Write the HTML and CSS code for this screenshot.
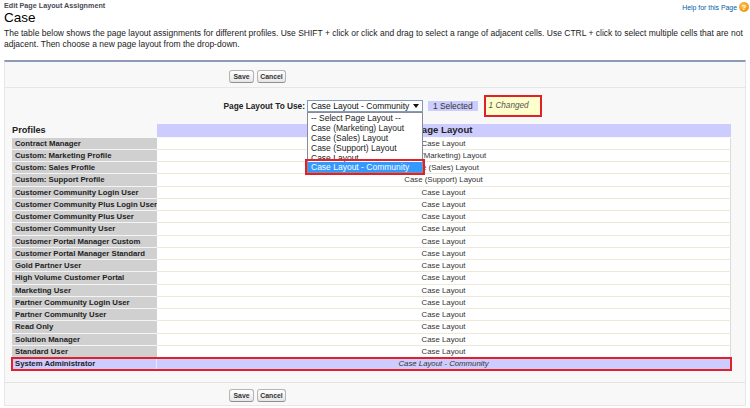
FILE: index.html
```html
<!DOCTYPE html>
<html>
<head>
<meta charset="utf-8">
<title>Edit Page Layout Assignment</title>
<link rel="stylesheet" href="styles.css">
</head>
<body>
<div class="page">
  <div class="top">
    <div class="titles">
      <div class="ptype">Edit Page Layout Assignment</div>
      <h1 class="title">Case</h1>
    </div>
    <a class="help">Help for this Page <span class="helpicon">?</span></a>
  </div>
  <p class="desc">The table below shows the page layout assignments for different profiles. Use SHIFT + click or click and drag to select a range of adjacent cells. Use CTRL + click to select multiple cells that are not<br>adjacent. Then choose a new page layout from the drop-down.</p>

  <div class="panel">
    <div class="btnrow">
      <button class="btn save">Save</button>
      <button class="btn cancel">Cancel</button>
    </div>

    <div class="chooser">
      <label class="chooser-label">Page Layout To Use:</label>
      <div class="selectwrap">
        <div class="select">
          <span>Case Layout - Community</span>
          <svg class="arrow" width="6" height="4" viewBox="0 0 6 4"><polygon points="0,0 6,0 3,4" fill="#111"/></svg>
        </div>
        <ul class="dropdown">
          <li>-- Select Page Layout --</li>
          <li>Case (Marketing) Layout</li>
          <li>Case (Sales) Layout</li>
          <li>Case (Support) Layout</li>
          <li class="cut">Case Layout</li>
          <li class="hi">Case Layout - Community</li>
        </ul>
      </div>
      <span class="selected">1 Selected</span>
      <span class="changed">1 Changed</span>
    </div>

    <div class="table">
      <div class="row head"><div class="hl">Profiles</div><div class="hr">Page Layout</div></div>
      <div class="row"><div class="c1">Contract Manager</div><div class="c2">Case Layout</div></div>
      <div class="row"><div class="c1">Custom: Marketing Profile</div><div class="c2">Case (Marketing) Layout</div></div>
      <div class="row"><div class="c1">Custom: Sales Profile</div><div class="c2">Case (Sales) Layout</div></div>
      <div class="row"><div class="c1">Custom: Support Profile</div><div class="c2">Case (Support) Layout</div></div>
      <div class="row"><div class="c1">Customer Community Login User</div><div class="c2">Case Layout</div></div>
      <div class="row"><div class="c1">Customer Community Plus Login User</div><div class="c2">Case Layout</div></div>
      <div class="row"><div class="c1">Customer Community Plus User</div><div class="c2">Case Layout</div></div>
      <div class="row"><div class="c1">Customer Community User</div><div class="c2">Case Layout</div></div>
      <div class="row"><div class="c1">Customer Portal Manager Custom</div><div class="c2">Case Layout</div></div>
      <div class="row"><div class="c1">Customer Portal Manager Standard</div><div class="c2">Case Layout</div></div>
      <div class="row"><div class="c1">Gold Partner User</div><div class="c2">Case Layout</div></div>
      <div class="row"><div class="c1">High Volume Customer Portal</div><div class="c2">Case Layout</div></div>
      <div class="row"><div class="c1">Marketing User</div><div class="c2">Case Layout</div></div>
      <div class="row"><div class="c1">Partner Community Login User</div><div class="c2">Case Layout</div></div>
      <div class="row"><div class="c1">Partner Community User</div><div class="c2">Case Layout</div></div>
      <div class="row"><div class="c1">Read Only</div><div class="c2">Case Layout</div></div>
      <div class="row"><div class="c1">Solution Manager</div><div class="c2">Case Layout</div></div>
      <div class="row"><div class="c1">Standard User</div><div class="c2">Case Layout</div></div>
      <div class="row sel"><div class="c1">System Administrator</div><div class="c2">Case Layout - Community</div></div>
    </div>

    <div class="btnrow bottom">
      <button class="btn save">Save</button>
      <button class="btn cancel">Cancel</button>
    </div>
  </div>
</div>
</body>
</html>
```

FILE: styles.css
```css
* { box-sizing: border-box; }
html, body { margin: 0; padding: 0; background: #fff; }
body {
  font-family: "Liberation Sans", Arial, sans-serif;
  color: #222;
  width: 750px;
  height: 408px;
  overflow: hidden;
}
.page { padding: 0 1px 0 4px; }

.top { display: flex; justify-content: space-between; align-items: flex-start; }
.ptype {
  font-size: 7.2px;
  font-weight: bold;
  color: #4a4a56;
  line-height: 9px;
  margin-top: 1px;
}
.title {
  margin: 0;
  font-size: 13.5px;
  font-weight: normal;
  line-height: 15px;
  color: #000;
}
.help {
  display: flex;
  align-items: center;
  gap: 2px;
  font-size: 6.9px;
  color: #015ba7;
  margin-top: 2px;
  text-decoration: none;
}
.helpicon {
  width: 10px;
  height: 10px;
  border-radius: 50%;
  background: radial-gradient(circle at 40% 35%, #ffc24a, #e58600);
  color: #fff;
  font-weight: bold;
  font-size: 7.5px;
  display: flex;
  align-items: center;
  justify-content: center;
}

.desc {
  margin: 3px 0 10px;
  font-size: 8.5px;
  line-height: 11px;
  color: #222;
  white-space: nowrap;
}

.panel {
  margin-right: 3px;
  border-top: 2px solid #8e9bb8;
  border-left: 1px solid #e6e6e6;
  border-right: 1px solid #e6e6e6;
  border-bottom: 1px solid #e6e6e6;
  background: #f8f8f8;
}

.btnrow {
  display: flex;
  gap: 3px;
  padding: 8px 0 4px 224px;
  border-bottom: 1px solid #e6e6e6;
}
.btnrow.bottom {
  margin-top: 12px;
  border-bottom: none;
  border-top: 1px solid #e3e3e3;
  padding: 6px 0 3px 224px;
}
.btn {
  height: 13px;
  padding: 0;
  font-family: "Liberation Sans", Arial, sans-serif;
  font-size: 6.9px;
  font-weight: bold;
  color: #333;
  background: linear-gradient(#ffffff, #e6e6e6);
  border: 1px solid #b5b5b5;
  border-bottom-color: #8f8f8f;
  border-radius: 3px;
  line-height: 11px;
}
.btn.save { width: 25px; }
.btn.cancel { width: 29px; }

.chooser {
  display: flex;
  align-items: center;
  padding: 7px 0;
}
.chooser-label {
  width: 302px;
  padding-right: 2px;
  text-align: right;
  font-weight: bold;
  font-size: 8.3px;
  color: #222;
}
.selectwrap {
  position: relative;
  width: 116px;
  height: 12px;
}
.select {
  height: 12px;
  border: 1px solid #7f9db9;
  background: #fff;
  font-size: 8.5px;
  line-height: 10px;
  padding: 0 3px 0 3px;
  display: flex;
  justify-content: space-between;
  align-items: center;
  color: #111;
}
.dropdown {
  position: absolute;
  top: 12px;
  left: 0;
  width: 116px;
  margin: 0;
  padding: 0;
  list-style: none;
  background: #fff;
  border: 1px solid #8a8a9a;
  z-index: 5;
}
.dropdown li {
  height: 10px;
  line-height: 10px;
  font-size: 8.5px;
  padding-left: 3px;
  color: #222;
  white-space: nowrap;
  overflow: hidden;
}
.dropdown li.cut { height: 9px; }
.dropdown li.hi {
  background: #3399ff;
  color: #fff;
  outline: 2px solid #e2202a;
  outline-offset: 1px;
}
.selected {
  margin-left: 5px;
  background: #ccccff;
  font-size: 8.4px;
  padding: 0 5px;
  height: 10px;
  line-height: 10px;
  color: #333;
}
.changed {
  margin-left: 6px;
  width: 58px;
  height: 22px;
  border: 2px solid #e2202a;
  background: #ffffcc;
  font-style: italic;
  font-size: 8.2px;
  color: #555;
  padding-left: 3px;
  line-height: 18px;
}

.table {
  margin: 0 14px 0 7px;
  display: flex;
  flex-direction: column;
}
.row {
  display: grid;
  grid-template-columns: 145px 574px;
  height: 12.25px;
}
.row.head { height: 13.5px; }
.hl {
  font-weight: bold;
  font-size: 9.2px;
  line-height: 13px;
  color: #222;
}
.hr {
  background: #ccccff;
  text-align: center;
  font-weight: bold;
  font-size: 9.6px;
  line-height: 12.5px;
  color: #222;
  margin-bottom: 1px;
}
.c1 {
  background: #d0d0d0;
  border-bottom: 1px solid #f4f4f4;
  font-weight: bold;
  font-size: 7.75px;
  line-height: 11.25px;
  padding-left: 3px;
  white-space: nowrap;
  overflow: hidden;
  color: #222;
}
.c2 {
  background: #fff;
  border-bottom: 1px solid #ece9d8;
  border-right: 1px solid #dcdcdc;
  text-align: center;
  font-size: 7.8px;
  line-height: 11.25px;
  color: #333;
}
.row.sel {
  outline: 2px solid #e2202a;
  outline-offset: -1px;
}
.row.sel .c1 {
  background: #ccccff;
  border-right: 1px solid #e6e6ff;
}
.row.sel .c2 {
  background: #ccccff;
  font-style: italic;
}
```
